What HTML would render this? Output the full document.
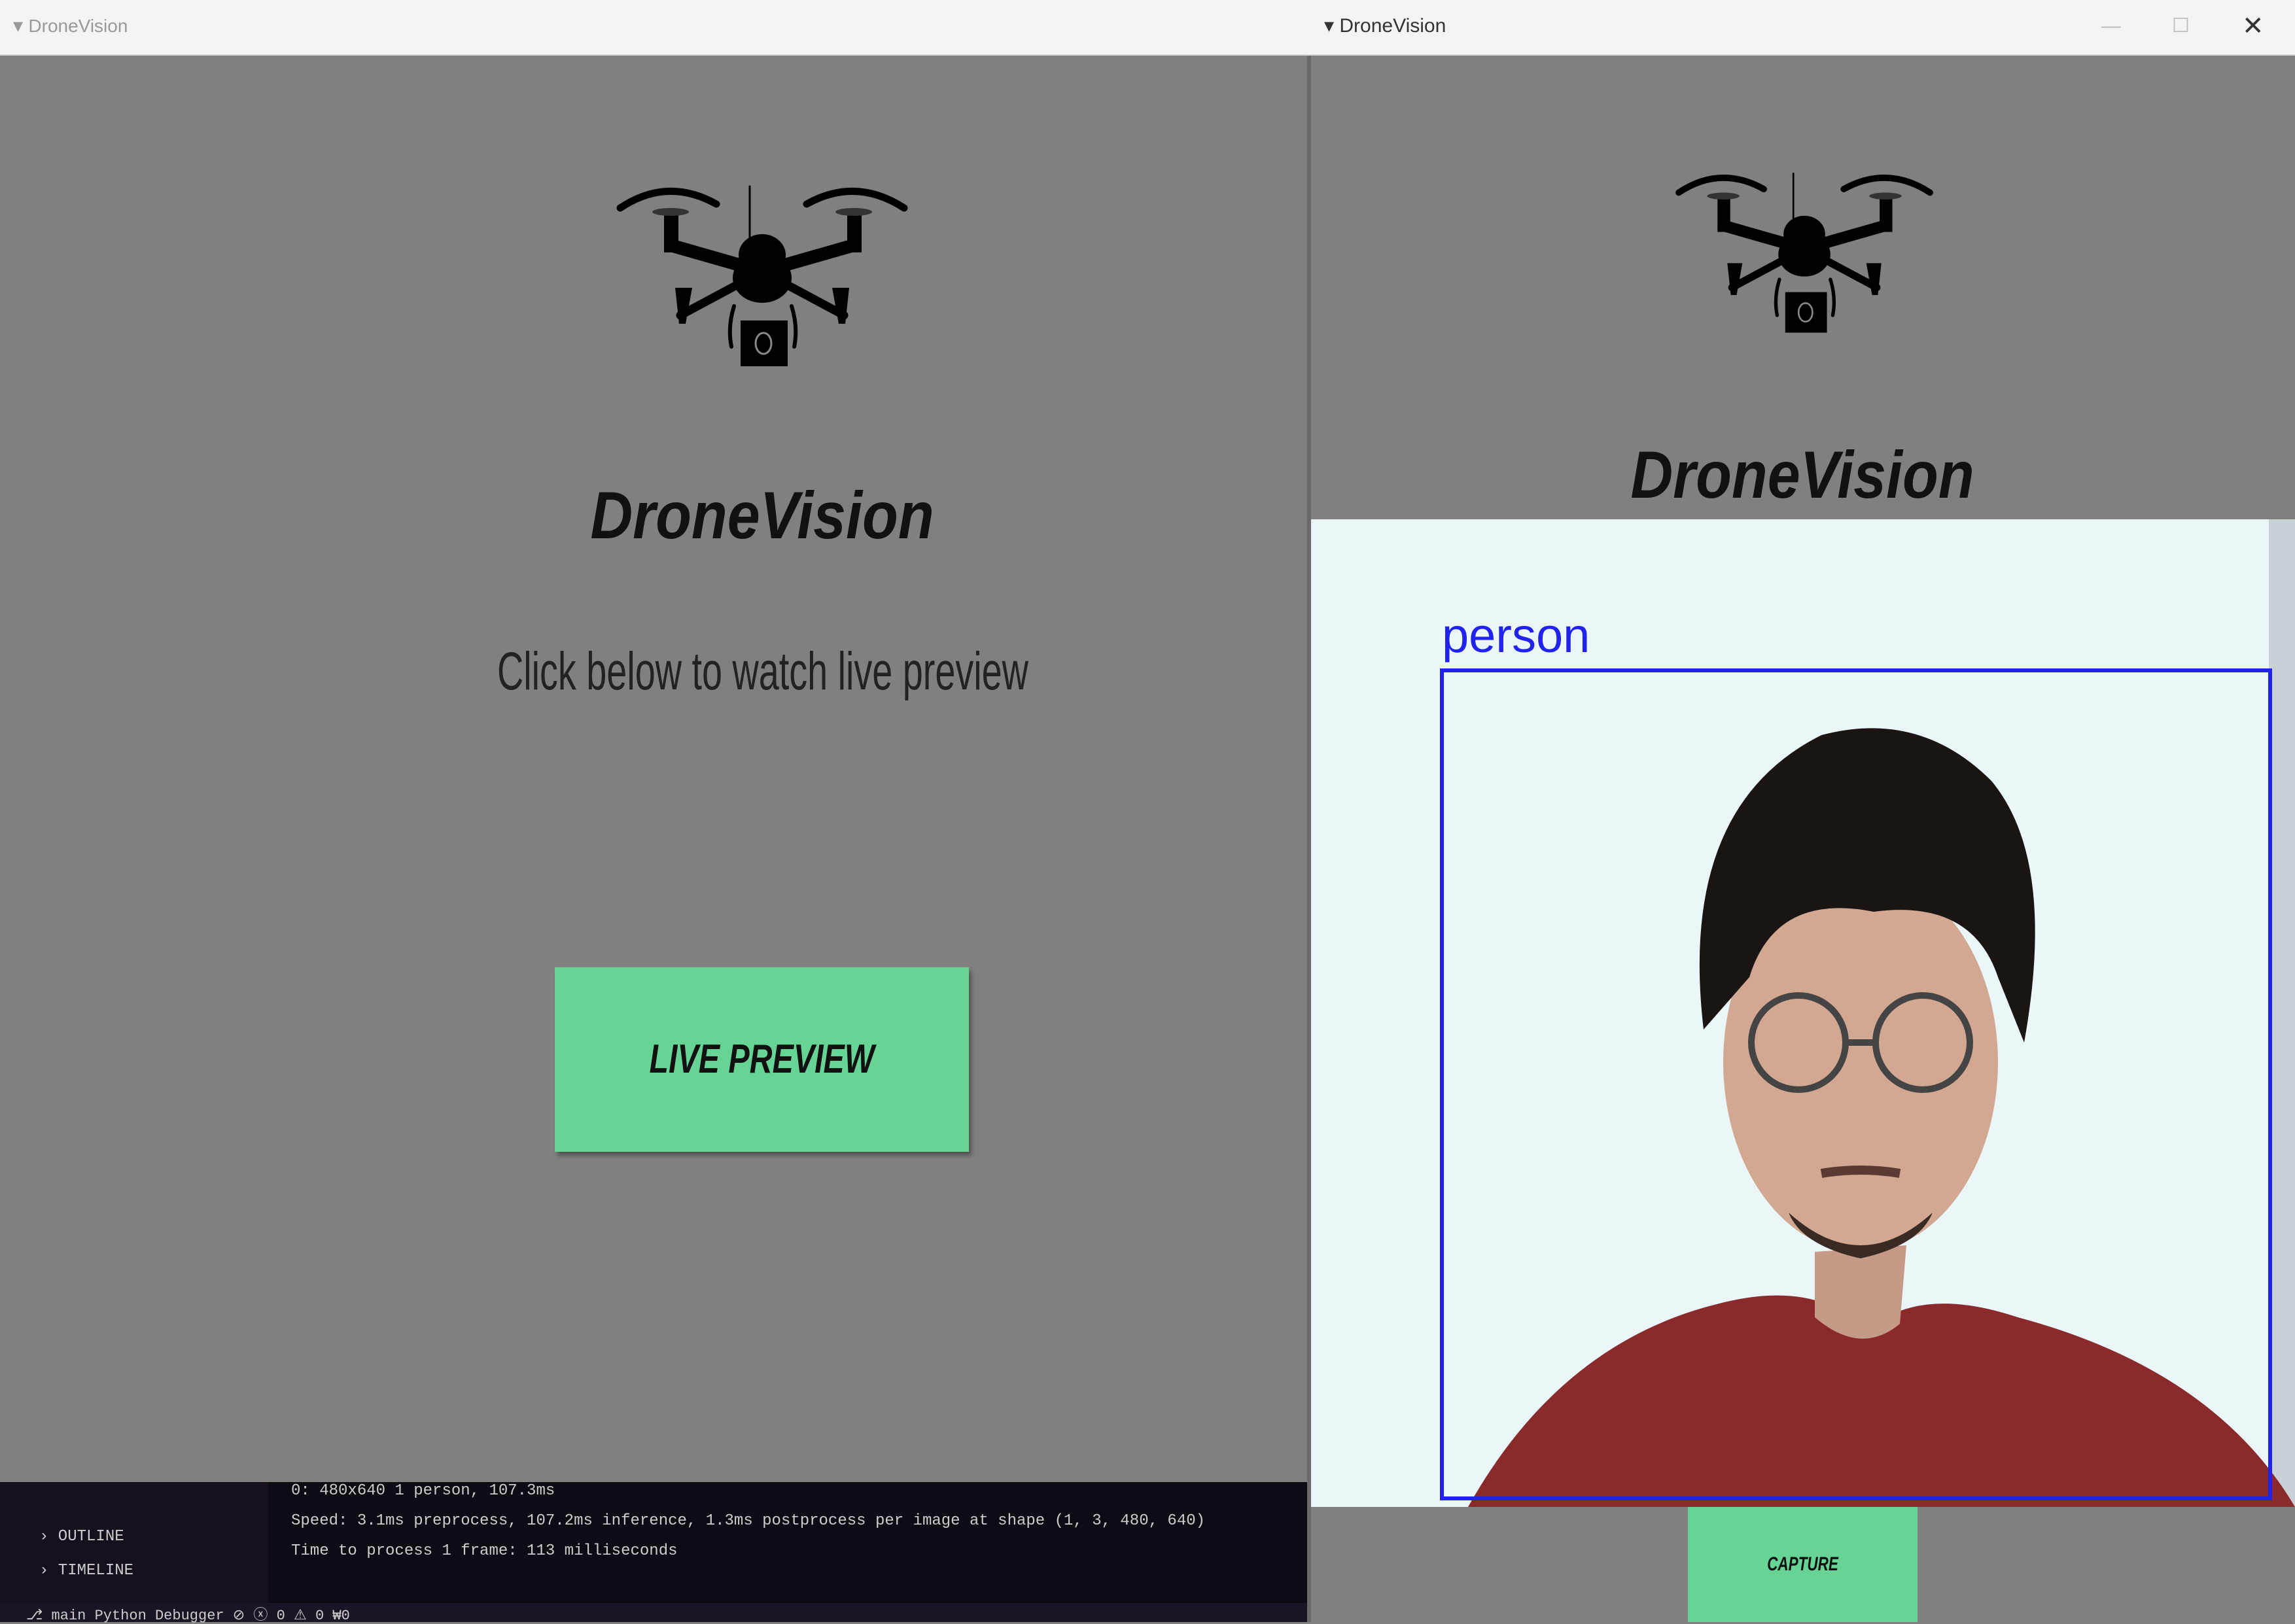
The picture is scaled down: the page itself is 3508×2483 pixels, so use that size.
<!DOCTYPE html>
<html><head><meta charset="utf-8"><style>
*{margin:0;padding:0;box-sizing:border-box}
body{width:3508px;height:2480px;position:relative;overflow:hidden;background:#808080;font-family:"Liberation Sans",sans-serif}
.abs{position:absolute}
.tb{top:0;height:85px;background:#f4f4f4;border-bottom:2px solid #d8d8d8;color:#999;font-size:30px;line-height:80px}
.title{font-weight:bold;font-style:italic;color:#111;font-size:102px;text-align:center;transform:scaleX(0.88)}
.btn{background:#66d494;box-shadow:4px 6px 6px rgba(0,0,0,.35);text-align:center;font-weight:bold;font-style:italic;color:#111}
</style></head><body>
<div class="abs tb" style="left:0;width:2002px;padding-left:20px">▾ <span style="font-size:28px">DroneVision</span></div>
<div class="abs tb" style="left:2002px;width:1506px;padding-left:22px;color:#333">▾ DroneVision
<span class="abs" style="left:1210px;top:0;color:#bbb">—</span>
<span class="abs" style="left:1318px;top:0;color:#bbb">☐</span>
<span class="abs" style="left:1425px;top:0;color:#333;font-size:40px">✕</span></div>
<div class="abs" style="left:1998px;top:85px;width:6px;height:2395px;background:#6a6a6a"></div>

<svg class="abs" style="left:900px;top:200px" width="600" height="400" viewBox="0 0 600 400" id="dr">
<g fill="none" stroke="#000" stroke-linecap="round">
<path d="M48 118 Q120 70 195 112" stroke-width="11"/>
<path d="M333 112 Q408 70 482 118" stroke-width="11"/>
<path d="M125 175 L265 215 L405 175" stroke-width="20"/>
<path d="M140 282 L265 215 L390 282" stroke-width="13"/>
<path d="M246 85 L246 170" stroke-width="3"/>
<path d="M222 268 Q212 300 218 330 M310 268 Q320 300 314 330" stroke-width="6"/>
</g>
<g fill="#000">
<rect x="115" y="124" width="22" height="62"/><rect x="395" y="124" width="22" height="62"/>
<ellipse cx="125" cy="124" rx="28" ry="6" fill="#333"/><ellipse cx="405" cy="124" rx="28" ry="6" fill="#333"/>
<ellipse cx="265" cy="190" rx="36" ry="32"/><ellipse cx="265" cy="225" rx="45" ry="38"/>
<path d="M132 240 L158 240 L148 295 L138 295Z"/><path d="M372 240 L398 240 L392 295 L382 295Z"/>
<rect x="232" y="290" width="72" height="70"/>
</g>
<ellipse cx="267" cy="325" rx="12" ry="16" fill="none" stroke="#888" stroke-width="3"/>
</svg>

<div class="abs title" style="left:760px;width:810px;top:730px">DroneVision</div>
<div class="abs" style="left:760px;width:1930px;top:980px;font-size:82px;color:#222;transform:scaleX(0.68);transform-origin:0 0;">Click below to watch live preview</div>
<div class="abs btn" style="left:848px;top:1479px;width:633px;height:282px;line-height:282px;font-size:62px"><span style="display:inline-block;transform:scaleX(0.78)">LIVE PREVIEW</span></div>

<div class="abs" style="left:0;top:2266px;width:1998px;height:214px;background:#0f0b14;color:#ccc;font-family:'Liberation Mono',monospace;font-size:24px">
<div class="abs" style="left:0;top:0;width:410px;height:185px;background:#15101c"></div>
<div class="abs" style="left:60px;top:70px">› OUTLINE</div><div class="abs" style="left:60px;top:122px">› TIMELINE</div>
<div class="abs" style="left:445px;top:0">0: 480x640 1 person, 107.3ms</div>
<div class="abs" style="left:445px;top:46px">Speed: 3.1ms preprocess, 107.2ms inference, 1.3ms postprocess per image at shape (1, 3, 480, 640)</div>
<div class="abs" style="left:445px;top:92px">Time to process 1 frame: 113 milliseconds</div>
<div class="abs" style="left:0;top:185px;width:1998px;height:29px;background:#1a1424;font-size:22px;padding-left:40px">⎇ main  Python Debugger ⊘  ⓧ 0 ⚠ 0   ₩0</div>
</div>

<svg class="abs" style="left:2523px;top:190px" width="532" height="354" viewBox="0 0 600 400"><use href="#dr"/></svg>
<div class="abs title" style="left:2350px;width:810px;top:668px">DroneVision</div>

<div class="abs" style="left:2004px;top:794px;width:1504px;height:1510px;background:#eaf6f8;overflow:hidden">
<div class="abs" style="right:0;top:0;width:40px;height:1510px;background:#c8d2d6"></div>
<div class="abs" style="left:200px;top:135px;color:#2222ee;font-size:74px">person</div>
<svg class="abs" style="left:0;top:0" width="1504" height="1510">
<path d="M240 1510 Q380 1260 620 1200 Q770 1160 850 1240 Q930 1170 1080 1220 Q1380 1300 1504 1510Z" fill="#8a2a2c"/>
<path d="M770 1120 L770 1220 Q840 1280 900 1230 L910 1110Z" fill="#c59a86"/>
<ellipse cx="840" cy="830" rx="210" ry="290" fill="#d2a892"/>
<path d="M600 780 Q560 440 780 330 Q930 290 1040 400 Q1140 520 1090 800 L1050 700 Q1010 580 860 600 Q710 570 670 700Z" fill="#1a1412"/>
<g fill="none" stroke="#444" stroke-width="10"><circle cx="745" cy="800" r="72"/><circle cx="935" cy="800" r="72"/><path d="M815 800 L865 800"/></g>
<path d="M780 1000 Q840 990 900 1000" stroke="#5a3a32" stroke-width="14" fill="none"/>
<path d="M730 1060 Q840 1160 950 1060 Q930 1110 840 1130 Q750 1110 730 1060Z" fill="#3a2a24"/>
<rect x="200" y="231" width="1266" height="1266" fill="none" stroke="#2222ee" stroke-width="6"/>
</svg>
</div>
<div class="abs btn" style="left:2580px;top:2304px;width:351px;height:176px;line-height:176px;font-size:30px;box-shadow:none"><span style="display:inline-block;transform:scaleX(0.75)">CAPTURE</span></div>
</body></html>
